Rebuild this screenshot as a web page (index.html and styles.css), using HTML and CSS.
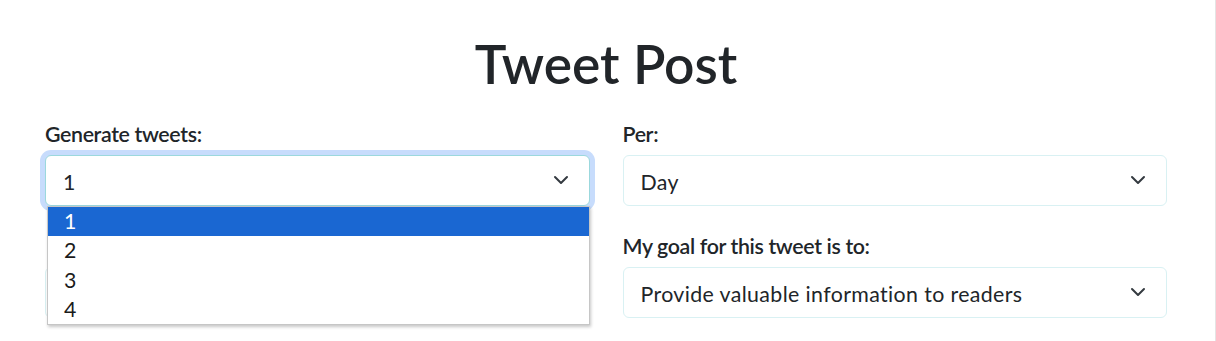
FILE: index.html
```html
<!DOCTYPE html>
<html lang="en">
<head>
<meta charset="utf-8">
<title>Tweet Post</title>
<link rel="stylesheet" href="styles.css">
</head>
<body>
<main class="page">
  <h1 class="title">Tweet Post</h1>
  <div class="form-grid">
    <div class="col">
      <div class="field">
        <label class="field-label">Generate tweets:</label>
        <div class="select-wrap">
          <div class="select is-focused" role="combobox" aria-expanded="true">
            <span class="select-value">1</span>
            <svg class="chevron" viewBox="0 0 16 16" width="16" height="16" aria-hidden="true"><path d="M2 5l6 6 6-6" fill="none" stroke="#343a40" stroke-width="2" stroke-linecap="round" stroke-linejoin="round"/></svg>
          </div>
          <ul class="listbox" role="listbox">
            <li class="option is-selected" role="option">1</li>
            <li class="option" role="option">2</li>
            <li class="option" role="option">3</li>
            <li class="option" role="option">4</li>
          </ul>
        </div>
      </div>
      <div class="field">
        <div class="label-spacer"></div>
        <div class="select"></div>
      </div>
    </div>
    <div class="col">
      <div class="field">
        <label class="field-label">Per:</label>
        <div class="select">
          <span class="select-value">Day</span>
          <svg class="chevron" viewBox="0 0 16 16" width="16" height="16" aria-hidden="true"><path d="M2 5l6 6 6-6" fill="none" stroke="#343a40" stroke-width="2" stroke-linecap="round" stroke-linejoin="round"/></svg>
        </div>
      </div>
      <div class="field">
        <label class="field-label">My goal for this tweet is to:</label>
        <div class="select">
          <span class="select-value">Provide valuable information to readers</span>
          <svg class="chevron" viewBox="0 0 16 16" width="16" height="16" aria-hidden="true"><path d="M2 5l6 6 6-6" fill="none" stroke="#343a40" stroke-width="2" stroke-linecap="round" stroke-linejoin="round"/></svg>
        </div>
      </div>
    </div>
  </div>
</main>
</body>
</html>
```

FILE: styles.css
```css
html, body {
  margin: 0;
  padding: 0;
}

body {
  min-height: 100vh;
  box-sizing: border-box;
  border-right: 1px solid #e4e4e4;
  background: #ffffff;
  color: #212529;
  font-family: Lato, "Open Sans", "Liberation Sans", sans-serif;
}

.page {
  width: 1122px;
  padding: 31px 0 0 45px;
}

.title {
  margin: 0 0 23px;
  font-size: 53.33px;
  line-height: 64px;
  font-weight: 600;
  text-align: center;
}

.form-grid {
  display: grid;
  grid-template-columns: 1fr 1fr;
  column-gap: 33px;
}

.field + .field {
  margin-top: 24px;
}

.field-label {
  display: block;
  margin-bottom: 5px;
  font-size: 21.33px;
  line-height: 32px;
  font-weight: 600;
  letter-spacing: -0.35px;
}

.label-spacer {
  height: 32px;
  margin-bottom: 5px;
}

.select-wrap {
  position: relative;
}

.select {
  height: 51px;
  box-sizing: border-box;
  display: flex;
  align-items: center;
  justify-content: space-between;
  padding: 2px 20px 0 17px;
  border: 1px solid #d9f1f3;
  border-radius: 6px;
  background: #ffffff;
  font-size: 21.33px;
  line-height: 32px;
}

.select-value {
  letter-spacing: 0.38px;
}

.select.is-focused {
  border-color: #9bd8dd;
  box-shadow: 0 0 0 5px #c7dcfc;
}

.chevron {
  flex: none;
  margin-top: -3px;
}

.listbox {
  position: absolute;
  z-index: 5;
  top: 100%;
  left: 2px;
  right: 0;
  margin: 0;
  padding: 0;
  list-style: none;
  background: #ffffff;
  border: 1px solid #c6c6c6;
  box-shadow: 1px 2px 3px rgba(0, 0, 0, 0.22);
}

.option {
  height: 29.33px;
  padding: 0 16px;
  font-size: 21.33px;
  line-height: 29.33px;
  color: #1b1b1b;
}

.option.is-selected {
  background: #1a67d2;
  color: #ffffff;
}
```
